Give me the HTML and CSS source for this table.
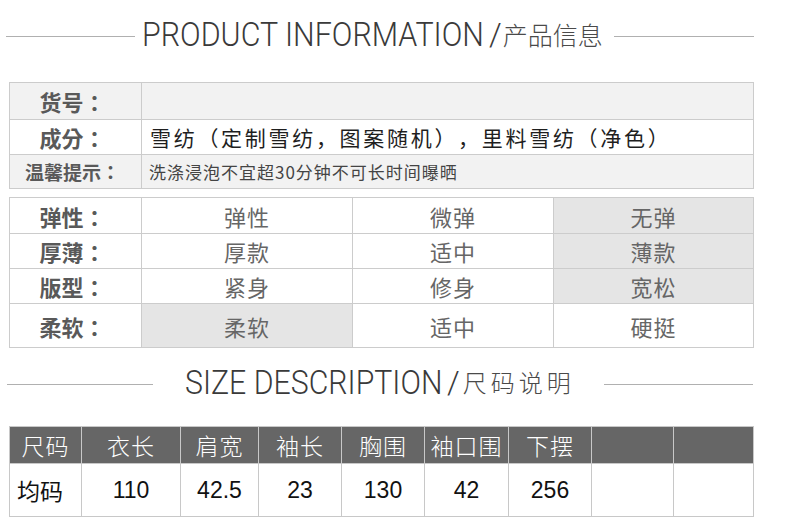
FILE: index.html
```html
<!DOCTYPE html>
<html>
<head>
<meta charset="utf-8">
<title>Product information</title>
<link rel="stylesheet" href="styles.css">
</head>
<body>
<div class="page">
  <div class="heading heading-1">
    <span class="rule rule-l1"></span>
    <span class="en en-1"><span class="en-in">PRODUCT INFORMATION</span></span>
    <span class="slash slash-1">/</span>
    <span class="cn cn-1">产品信息</span>
    <span class="rule rule-r1"></span>
  </div>

  <table class="info info-1">
    <colgroup><col class="c-label"><col></colgroup>
    <tr class="r-a shade"><td class="label">货号：</td><td></td></tr>
    <tr class="r-b"><td class="label">成分：</td><td class="comp">雪纺（定制雪纺，图案随机），里料雪纺（净色）</td></tr>
    <tr class="r-c shade"><td class="label small">温馨提示：</td><td class="tip">洗涤浸泡不宜超30分钟不可长时间曝晒</td></tr>
  </table>

  <table class="info info-2">
    <colgroup><col class="c-label"><col class="c-1"><col class="c-2"><col></colgroup>
    <tr class="r-d"><td class="label">弹性：</td><td class="val">弹性</td><td class="val">微弹</td><td class="val on">无弹</td></tr>
    <tr class="r-e"><td class="label">厚薄：</td><td class="val">厚款</td><td class="val">适中</td><td class="val on">薄款</td></tr>
    <tr class="r-f"><td class="label">版型：</td><td class="val">紧身</td><td class="val">修身</td><td class="val on">宽松</td></tr>
    <tr class="r-g"><td class="label">柔软：</td><td class="val on">柔软</td><td class="val">适中</td><td class="val">硬挺</td></tr>
  </table>

  <div class="heading heading-2">
    <span class="rule rule-l2"></span>
    <span class="en en-2"><span class="en-in">SIZE DESCRIPTION</span></span>
    <span class="slash slash-2">/</span>
    <span class="cn cn-2">尺码说明</span>
    <span class="rule rule-r2"></span>
  </div>

  <table class="size">
    <colgroup>
      <col class="s1"><col class="s2"><col class="s3"><col class="s4"><col class="s5"><col class="s6"><col class="s7"><col class="s8"><col>
    </colgroup>
    <tr class="head">
      <th>尺码</th><th>衣长</th><th>肩宽</th><th>袖长</th><th>胸围</th><th>袖口围</th><th>下摆</th><th></th><th></th>
    </tr>
    <tr class="data">
      <td class="first">均码</td><td>110</td><td>42.5</td><td>23</td><td>130</td><td>42</td><td>256</td><td></td><td></td>
    </tr>
  </table>
</div>
</body>
</html>
```

FILE: styles.css
```css
* { box-sizing: border-box; }

html, body {
  margin: 0;
  padding: 0;
  background: #ffffff;
}

body {
  font-family: "Noto Sans CJK SC", "Noto Sans", sans-serif;
  color: #333;
  text-spacing-trim: space-all;
}

.page {
  width: 790px;
  height: 528px;
  overflow: hidden;
}

/* ---------- section headings ---------- */
.heading {
  display: flex;
  align-items: center;
  height: 72px;
  white-space: nowrap;
}

.rule {
  display: block;
  height: 1px;
  background: #b0b0b0;
  flex: none;
}

.rule-l1 { width: 129px; margin-left: 6px; }
.rule-r1 { width: 140px; margin-left: 11px; }
.rule-l2 { width: 146px; margin-left: 7px; }
.rule-r2 { width: 149px; margin-left: 29px; }

.en {
  display: block;
  flex: none;
  overflow: visible;
  font-family: Roboto, "Liberation Sans", sans-serif;
  font-weight: 300;
  font-size: 34px;
  line-height: 34px;
  color: #3a3a3a;
  margin-bottom: 4px;
}

.en-in {
  display: inline-block;
  transform-origin: 0 50%;
}

.en-1 { width: 340px; margin-left: 7px; }
.en-1 .en-in { transform: scaleX(0.895); }
.en-2 { width: 255px; margin-left: 32px; }
.en-2 .en-in { transform: scaleX(0.89); }

.slash {
  display: block;
  flex: none;
  font-family: Roboto, "Liberation Sans", sans-serif;
  font-weight: 300;
  font-size: 32px;
  line-height: 34px;
  color: #3a3a3a;
  margin-bottom: 4px;
}

.slash-1 { margin-left: 7px; }
.slash-2 { margin-left: 7px; }

.cn {
  display: block;
  flex: none;
  font-weight: 300;
  color: #4a4a4a;
  margin-bottom: 4px;
}

.cn-1 { font-size: 25px; line-height: 30px; margin-left: 1px; }
.cn-2 { font-size: 24px; line-height: 30px; letter-spacing: 4px; margin-left: 3px; }

/* ---------- information tables ---------- */
.info {
  border-collapse: collapse;
  table-layout: fixed;
  width: 745px;
  margin-left: 9px;
}

.info td {
  border: 1px solid #cccccc;
  padding: 0;
  vertical-align: middle;
}

.info-1 { margin-top: 10px; }
.info-2 { margin-top: 8px; }

.c-label { width: 132px; }
.c-1 { width: 211px; }
.c-2 { width: 201px; }

.shade td { background: #f2f2f2; }

.r-a { height: 37px; }
.r-b { height: 35px; }
.r-c { height: 34px; }
.r-d { height: 36px; }
.r-e { height: 35px; }
.r-f { height: 35px; }
.r-g { height: 44px; }

.label {
  font-family: "Noto Sans CJK TC", "Noto Sans CJK SC", sans-serif;
  font-weight: 700;
  font-size: 22px;
  line-height: 26px;
  color: #595959;
  text-align: center;
  padding-right: 6px !important;
}

.label.small { font-size: 19px; }

.comp {
  font-size: 21px;
  line-height: 26px;
  letter-spacing: 2.7px;
  color: #1e1e1e;
  padding-left: 8px !important;
}

.tip {
  font-size: 17px;
  line-height: 22px;
  letter-spacing: 1px;
  color: #444;
  padding-left: 7px !important;
}

.val {
  font-size: 22px;
  line-height: 26px;
  letter-spacing: 1px;
  color: #666;
  text-align: center;
}

.info td.on { background: #e5e5e5; }

/* ---------- size table ---------- */
.size {
  border-collapse: collapse;
  table-layout: fixed;
  width: 745px;
  margin-left: 9px;
  margin-top: 6px;
}

.size th, .size td {
  border: 1px solid #c8c8c8;
  padding: 0;
  text-align: center;
  vertical-align: middle;
}

.s1 { width: 72px; }
.s2 { width: 99px; }
.s3 { width: 78px; }
.s4 { width: 83px; }
.s5 { width: 83px; }
.s6 { width: 84px; }
.s7 { width: 83px; }
.s8 { width: 82px; }

.head { height: 37px; }
.head th {
  background: #666666;
  color: #ffffff;
  font-weight: 300;
  font-size: 23px;
  line-height: 28px;
  letter-spacing: 1px;
}

.data { height: 53px; }
.data td {
  font-family: "Liberation Sans", Arial, sans-serif;
  font-size: 23px;
  line-height: 28px;
  color: #111;
}

.data td.first {
  font-family: "Noto Sans CJK SC", sans-serif;
  text-align: left;
  padding-left: 7px;
}
```
